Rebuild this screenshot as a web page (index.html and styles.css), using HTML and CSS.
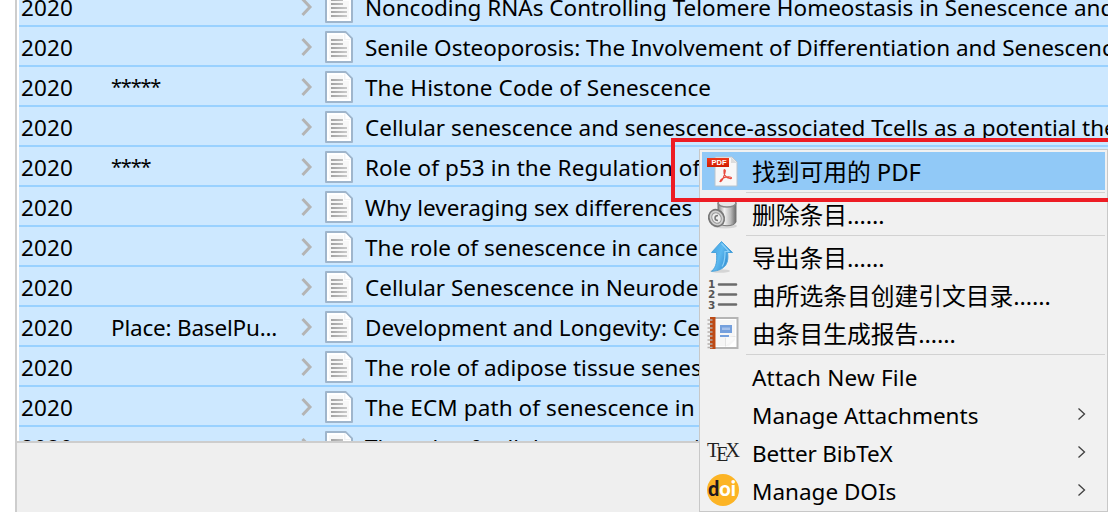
FILE: index.html
```html
<!DOCTYPE html>
<html lang="zh-CN">
<head>
<meta charset="utf-8">
<title>Library</title>
<link rel="stylesheet" href="styles.css">
</head>
<body>
<svg class="defs" aria-hidden="true">
  <defs>
    <linearGradient id="tin" x1="0" x2="1"><stop offset="0" stop-color="#888"/><stop offset=".35" stop-color="#f2f2f2"/><stop offset=".7" stop-color="#bbb"/><stop offset="1" stop-color="#6a6a6a"/></linearGradient>
    <linearGradient id="blue" x1="0" x2="1" y1="0" y2=".5"><stop offset="0" stop-color="#3d9fe0"/><stop offset=".5" stop-color="#5cb9f0"/><stop offset="1" stop-color="#2b86cc"/></linearGradient>
    <linearGradient id="pdfred" x1="0" x2="0" y1="0" y2="1"><stop offset="0" stop-color="#f0391c"/><stop offset="1" stop-color="#d01c00"/></linearGradient>
    <linearGradient id="rule" x1="0" x2="1"><stop offset="0" stop-color="#a2a2a2"/><stop offset="1" stop-color="#cbcbcb"/></linearGradient>
  </defs>
  <symbol id="twisty" viewBox="0 0 12 20"><path d="M1.500 2l7.500 8-7.500 8" fill="none" stroke="#b4b4b4" stroke-width="3"/></symbol>
  <symbol id="doc" viewBox="0 0 28 32">
    <path d="M1 1h19.500l6.500 6.500V31H1z" fill="#fff" stroke="#9fb5cb" stroke-width="2" stroke-linejoin="round"/>
    <path d="M4 4h14v6h6v18H4z" fill="#f8f8f8"/>
    <path d="M19 2v7h7z" fill="#f0f2f4"/><path d="M20.500 2v6H26z" fill="#fff"/>
    <path d="M6 8h12v2H6zM6 12h12v2H6zM6 16h16v2H6zM6 20h16v2H6zM6 24h16v2H6z" fill="url(#rule)"/>
  </symbol>
  <symbol id="arrow" viewBox="0 0 10 14"><path d="M1.500 1.500L7.500 7l-6 5.500" fill="none" stroke="#404040" stroke-width="1.300"/></symbol>
</svg>
<div class="window">
  <div class="list">
    <div class="row"><span class="year">2020</span><span class="extra"></span><svg class="twisty"><use href="#twisty"/></svg><svg class="doc"><use href="#doc"/></svg><span class="title">Noncoding RNAs Controlling Telomere Homeostasis in Senescence and</span></div>
    <div class="row"><span class="year">2020</span><span class="extra"></span><svg class="twisty"><use href="#twisty"/></svg><svg class="doc"><use href="#doc"/></svg><span class="title">Senile Osteoporosis: The Involvement of Differentiation and Senescence</span></div>
    <div class="row"><span class="year">2020</span><span class="extra stars">*****</span><svg class="twisty"><use href="#twisty"/></svg><svg class="doc"><use href="#doc"/></svg><span class="title wide">The Histone Code of Senescence</span></div>
    <div class="row"><span class="year">2020</span><span class="extra"></span><svg class="twisty"><use href="#twisty"/></svg><svg class="doc"><use href="#doc"/></svg><span class="title">Cellular senescence and senescence-associated Tcells as a potential the</span></div>
    <div class="row"><span class="year">2020</span><span class="extra stars">****</span><svg class="twisty"><use href="#twisty"/></svg><svg class="doc"><use href="#doc"/></svg><span class="title wide">Role of p53 in the Regulation of</span></div>
    <div class="row"><span class="year">2020</span><span class="extra"></span><svg class="twisty"><use href="#twisty"/></svg><svg class="doc"><use href="#doc"/></svg><span class="title">Why leveraging sex differences</span></div>
    <div class="row"><span class="year">2020</span><span class="extra"></span><svg class="twisty"><use href="#twisty"/></svg><svg class="doc"><use href="#doc"/></svg><span class="title">The role of senescence in cancer</span></div>
    <div class="row"><span class="year">2020</span><span class="extra"></span><svg class="twisty"><use href="#twisty"/></svg><svg class="doc"><use href="#doc"/></svg><span class="title">Cellular Senescence in Neurode</span></div>
    <div class="row"><span class="year">2020</span><span class="extra place">Place: BaselPu...</span><svg class="twisty"><use href="#twisty"/></svg><svg class="doc"><use href="#doc"/></svg><span class="title">Development and Longevity: Ce</span></div>
    <div class="row"><span class="year">2020</span><span class="extra"></span><svg class="twisty"><use href="#twisty"/></svg><svg class="doc"><use href="#doc"/></svg><span class="title">The role of adipose tissue senes</span></div>
    <div class="row"><span class="year">2020</span><span class="extra"></span><svg class="twisty"><use href="#twisty"/></svg><svg class="doc"><use href="#doc"/></svg><span class="title wide">The ECM path of senescence in</span></div>
    <div class="row"><span class="year">2020</span><span class="extra"></span><svg class="twisty"><use href="#twisty"/></svg><svg class="doc"><use href="#doc"/></svg><span class="title">The role of cellular senescence i</span></div>
  </div>
</div>

<div class="menu">
  <div class="item active">
    <svg class="icon" viewBox="0 0 32 32"><path d="M8 2h17l5 5v24H8z" fill="#f7f7f7" stroke="#b9c4ce" stroke-width="1"/><path d="M24 2v6h6z" fill="#ddd"/><path d="M0 3h22v9H0z" fill="url(#pdfred)"/><text x="4.500" y="10.200" class="pdf-label">PDF</text><path d="M13 26.500c.5-3 5-5 10-4.500 2 .2 2 1.800 0 1.500-4-.5-6.500-4-6-8 .2-1.300 1.500-1 1.300.5C17.800 20 15 27 13 26.500z" fill="none" stroke="#e8483c" stroke-width="1.200"/></svg>
    <span class="label cjk">找到可用的 PDF</span>
  </div>
  <div class="sep"></div>
  <div class="item">
    <svg class="icon" viewBox="0 0 32 32"><ellipse cx="18" cy="28" rx="12" ry="2.500" fill="#d5d5d5"/><path d="M11 5v19c2 5 16 5 18 0V5z" fill="url(#tin)" stroke="#777"/><ellipse cx="20" cy="5" rx="9" ry="4" fill="#e6e6e6" stroke="#888" stroke-width="1.500"/><ellipse cx="9.500" cy="20" rx="7.500" ry="8.500" transform="rotate(-30 9.500 20)" fill="#d0d0d0" stroke="#777" stroke-width="1.700"/><ellipse cx="9.500" cy="20" rx="4.500" ry="5.500" transform="rotate(-30 9.500 20)" fill="#eee" stroke="#999"/><path d="M11 17.500c-4 0-4 5 0 5" fill="none" stroke="#777" stroke-width="1.500"/></svg>
    <span class="label cjk">删除条目……</span>
  </div>
  <div class="sep"></div>
  <div class="item">
    <svg class="icon" viewBox="0 0 32 32"><ellipse cx="13" cy="30" rx="10" ry="1.700" fill="#d5d5d5"/><path d="M14.500 .5L25.500 11.500h-5c1.500 9-1 18-16 18.800C10 26 10 19 9.500 11.500h-5z" fill="url(#blue)" stroke="#4aa3dc"/><path d="M14.500 2.500l7.500 8h-4c0 6 0 11-3 15" fill="none" stroke="#8ad0f8" stroke-width="1.200"/></svg>
    <span class="label cjk">导出条目……</span>
  </div>
  <div class="item">
    <svg class="icon" viewBox="0 0 32 32"><g class="digits"><text x="1" y="8.500">1</text><text x="1" y="19">2</text><text x="1" y="29.500">3</text></g><path d="M12 5.500h17M12 15.500h17M12 25.500h17" stroke="#6b6b6b" stroke-width="2.600" stroke-linecap="round"/></svg>
    <span class="label cjk">由所选条目创建引文目录……</span>
  </div>
  <div class="item">
    <svg class="icon" viewBox="0 0 32 32"><path d="M7 1h23.500v30H7z" fill="#fff" stroke="#b5b5b5" stroke-width="2"/><path d="M9 3h19v20l-6 6H9z" fill="#f6f6f6"/><path d="M3 0h5.500v32H3z" fill="#bd4a15"/><path d="M.5 3h5M.5 7h5M.5 11h5M.5 15h5M.5 19h5M.5 23h5M.5 27h5M.5 30.500h5" stroke="#b5b0ad" stroke-width="1.700"/><path d="M13 8h12v8H13zM13 18h9v2h-9z" fill="#75a0dd"/><path d="M15 10.500h8v2.500h-8z" fill="#a5c1eb"/><path d="M18 30v-9l3-1 8-1z" fill="#e3e3e3"/><path d="M19 29V20h10z" fill="#fafafa"/></svg>
    <span class="label cjk">由条目生成报告……</span>
  </div>
  <div class="sep"></div>
  <div class="item"><span class="icon"></span><span class="label attach">Attach New File</span></div>
  <div class="item"><span class="icon"></span><span class="label">Manage Attachments</span><svg class="arrow"><use href="#arrow"/></svg></div>
  <div class="item">
    <span class="icon tex"><span>T</span><span class="tex-e">E</span><span class="tex-x">X</span></span>
    <span class="label bib">Better BibTeX</span><svg class="arrow"><use href="#arrow"/></svg>
  </div>
  <div class="item">
    <svg class="icon" viewBox="0 0 32 32"><circle cx="16" cy="16" r="16" fill="#fcb425"/><text x="1" y="21.500" class="doi" textLength="28" lengthAdjust="spacingAndGlyphs">d<tspan class="doi-light">oi</tspan></text></svg>
    <span class="label">Manage DOIs</span><svg class="arrow"><use href="#arrow"/></svg>
  </div>
</div>
<div class="highlight"></div>
</body>
</html>
```
FILE: styles.css
```css
* { box-sizing: border-box; }
body {
  margin: 0;
  width: 1108px;
  height: 512px;
  overflow: hidden;
  position: relative;
  background: #fff;
  color: #000;
  font: 22.5px/34px "Noto Sans", "Noto Sans CJK SC", sans-serif;
  white-space: nowrap;
}
.defs { position: absolute; width: 0; height: 0; }
.window {
  height: 512px;
  margin-left: 15px;
  border-left: 2px solid #cdcdcd;
  background: #efefef;
}
.list {
  height: 443px;
  padding-left: 2px;
  background: #fff;
  border-bottom: 2px solid #cdcdcd;
  overflow: hidden;
  display: flex;
  flex-direction: column;
}
.row {
  flex: none;
  height: 40px;
  display: flex;
  align-items: center;
  background: #cde8ff;
  border-bottom: 2px solid #99d1ff;
  overflow: hidden;
}
.row:first-child { margin-top: -13px; }
.year, .extra, .title { flex: none; padding-top: 4px; }
.year { width: 92px; padding-left: 2px; letter-spacing: 0.1px; }
.extra { width: 190px; }
.stars { font-size: 20px; letter-spacing: -1.2px; padding-top: 2px; }
.place { letter-spacing: -0.2px; }
.twisty { width: 12px; height: 20px; margin-top: 2px; flex: none; }
.doc { width: 28px; height: 32px; margin: 2px 0 0 12px; flex: none; }
.title { margin-left: 12px; }
.wide { letter-spacing: 0.1px; }

.menu {
  position: absolute;
  left: 699px;
  top: 149px;
  width: 409px;
  height: 363px;
  padding: 2px;
  border: 1px solid #c8c8c8;
  background: #f1f1f1;
}
.item { height: 38px; display: flex; align-items: center; padding-left: 5px; }
.active { background: #91c9f7; }
.icon { width: 32px; height: 32px; flex: none; }
.label { margin-left: 13px; padding-top: 4px; }
.cjk { font-size: 23.8px; padding-top: 2px; letter-spacing: -0.05px; }
.attach { letter-spacing: 0.2px; }
.bib { letter-spacing: -0.15px; }
.arrow { width: 10px; height: 14px; margin-left: auto; margin-right: 18px; }
.sep { height: 5px; padding: 2px 0 2px 44px; }
.sep::before { content: ""; display: block; height: 1px; background: #d2d2d2; }
.pdf-label { font: bold 7.5px "Liberation Sans", sans-serif; fill: #fff; }
.digits { font: bold 10.5px/1 "DejaVu Sans", sans-serif; fill: #555; }
.tex { font: 20px/28px "Liberation Serif", serif; letter-spacing: -1px; color: #222; display: flex; }
.tex-e { position: relative; top: 4px; margin-left: -2px; }
.tex-x { margin-left: -2px; }
.doi { font: 900 20px Lato, sans-serif; fill: #1d1820; }
.doi-light { fill: #fff; }
.highlight {
  position: absolute;
  left: 671px;
  top: 138px;
  width: 450px;
  height: 64px;
  border: 4px solid #ed1c24;
}
```
